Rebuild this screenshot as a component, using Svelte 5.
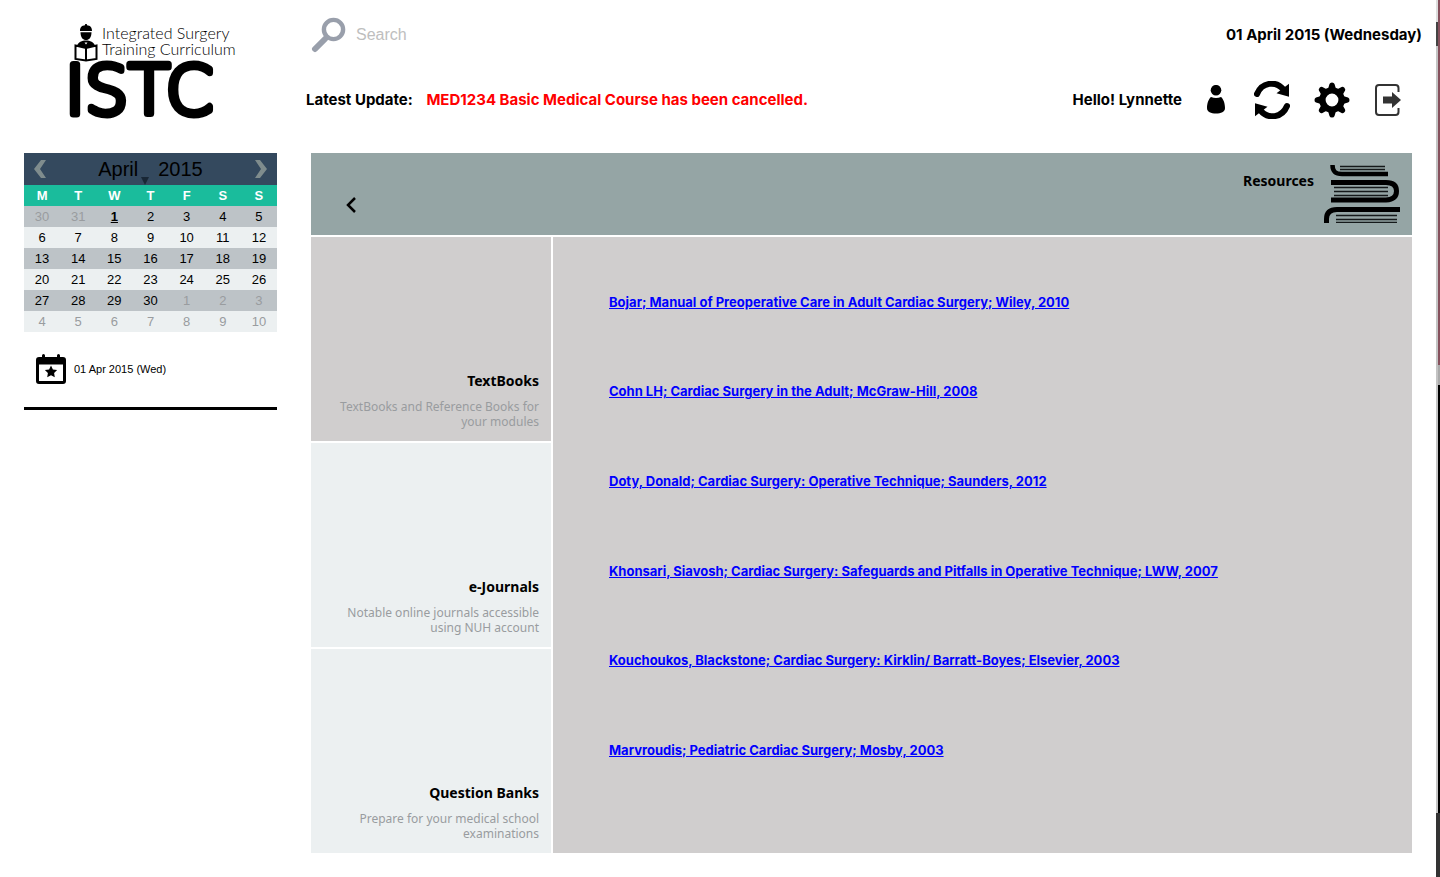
<script>
  const days = ['M', 'T', 'W', 'T', 'F', 'S', 'S'];
  const weeks = [
    [30, 31, 1, 2, 3, 4, 5],
    [6, 7, 8, 9, 10, 11, 12],
    [13, 14, 15, 16, 17, 18, 19],
    [20, 21, 22, 23, 24, 25, 26],
    [27, 28, 29, 30, 1, 2, 3],
    [4, 5, 6, 7, 8, 9, 10]
  ];
  const outside = (w, d) => (w === 0 && d > 20) || (w > 3 && d < 20);
  const sections = [
    { title: 'TextBooks', text: 'TextBooks and Reference Books for your modules' },
    { title: 'e-Journals', text: 'Notable online journals accessible using NUH account' },
    { title: 'Question Banks', text: 'Prepare for your medical school examinations' }
  ];
  const books = [
    'Bojar; Manual of Preoperative Care in Adult Cardiac Surgery; Wiley, 2010',
    'Cohn LH; Cardiac Surgery in the Adult; McGraw-Hill, 2008',
    'Doty, Donald; Cardiac Surgery: Operative Technique; Saunders, 2012',
    'Khonsari, Siavosh; Cardiac Surgery: Safeguards and Pitfalls in Operative Technique; LWW, 2007',
    'Kouchoukos, Blackstone; Cardiac Surgery: Kirklin/ Barratt-Boyes; Elsevier, 2003',
    'Marvroudis; Pediatric Cardiac Surgery; Mosby, 2003'
  ];
  let active = $state(0);
</script>

<div class="page">
  <aside>
    <div class="logo">
      <div class="logo-top">
        <svg width="24" height="38" viewBox="0 0 24 38" aria-hidden="true">
          <path d="M6 7C6 3 8 1.500 11 1.300L11.200 0h1.600L13 1.300C16 1.500 18 3 18 7z" />
          <path d="M6.500 8.200h11C17.500 13.500 15 16 12 16S6.500 13.500 6.500 8.200z" />
          <path d="M3 22C4 18 8 16.500 12 16.500S20 18 21 22L12 25z" />
          <path d="M1.500 21.500L12 24l10.500-2.500V35L12 36.500 1.500 35z" fill="#fff" stroke="#000" stroke-width="2" />
          <path d="M12 24v12.500" stroke="#000" stroke-width="2" />
          <path d="M10.500 18.500h3l-1.500 2z" fill="#fff" />
        </svg>
        <p>Integrated Surgery<br />Training Curriculum</p>
      </div>
      <svg class="wordmark" width="180" height="64" viewBox="0 0 180 64"><text x="-3" y="54">ISTC</text></svg>
    </div>

    <section class="calendar" aria-label="Calendar">
      <div class="cal-head">
        <button aria-label="Previous month">
          <svg width="12" height="18" viewBox="0 0 12 18"><path d="M7 0h5L6 9l6 9H7L0 9z" fill="#7f8c8d" /></svg>
        </button>
        <span class="month">April</span>
        <svg class="mark" width="8" height="8" viewBox="0 0 8 8" aria-hidden="true"><path d="M0 0h8L4 8z" fill="#192735" /></svg>
        <span class="year">2015</span>
        <button aria-label="Next month">
          <svg width="12" height="18" viewBox="0 0 12 18"><path d="M5 0H0l6 9-6 9h5l7-9z" fill="#7f8c8d" /></svg>
        </button>
      </div>
      <table>
        <thead>
          <tr>{#each days as d}<th>{d}</th>{/each}</tr>
        </thead>
        <tbody>
          {#each weeks as week, w}
            <tr>
              {#each week as d}
                <td class:outside={outside(w, d)} class:today={w === 0 && d === 1}>{d}</td>
              {/each}
            </tr>
          {/each}
        </tbody>
      </table>
    </section>

    <div class="event">
      <svg width="30" height="30" viewBox="0 0 30 30" aria-hidden="true">
        <path d="M7.500 1.500V5M22.500 1.500V5" stroke="#000" stroke-width="3" stroke-linecap="round" />
        <rect x="1.500" y="4.500" width="27" height="24" rx="1.500" fill="#fff" stroke="#000" stroke-width="3" />
        <path d="M1 4h28v6.500H1z" />
        <path d="M15 11.500l1.900 3.900 4.200.6-3 3 .7 4.200-3.800-2-3.800 2 .7-4.200-3-3 4.200-.6z" />
      </svg>
      <span>01 Apr 2015 (Wed)</span>
    </div>
  </aside>

  <main>
    <header>
      <div class="row search-row">
        <label class="search">
          <svg width="36" height="36" viewBox="0 0 36 36" aria-hidden="true">
            <path d="M14 22L4 32" stroke="#999fab" stroke-width="6" stroke-linecap="round" />
            <circle cx="22.500" cy="12.500" r="9.600" fill="none" stroke="#999fab" stroke-width="4.400" />
          </svg>
          <input type="text" placeholder="Search" aria-label="Search" />
        </label>
        <span class="date">01 April 2015 (Wednesday)</span>
      </div>
      <div class="row update-row">
        <p class="update">Latest Update: <strong>MED1234 Basic Medical Course has been cancelled.</strong></p>
        <div class="tools">
          <span>Hello! Lynnette</span>
          <button aria-label="Profile">
            <svg width="24" height="30" viewBox="0 0 24 30">
              <circle cx="10" cy="5.200" r="5.300" />
              <path d="M5 12Q10 14.200 15 12C17.500 14 19 18.500 19 23C19 27 15 28.500 10 28.500S1 27 1 23C1 18.500 2.500 14 5 12z" />
            </svg>
          </button>
          <button aria-label="Refresh">
            <svg width="36" height="38" viewBox="0 0 36 38">
              <path d="M3 13C8 1 22-.500 29.500 8.500" fill="none" stroke="#000" stroke-width="6" stroke-linecap="round" />
              <path d="M35 2.700v13L22.500 12.300z" />
              <path d="M33 25C28 37 14 38.500 6.500 29.500" fill="none" stroke="#000" stroke-width="6" stroke-linecap="round" />
              <path d="M1 35.300v-13L13.500 25.700z" />
            </svg>
          </button>
          <button aria-label="Settings">
            <svg width="36" height="36" viewBox="0 0 36 36">
              <circle cx="18" cy="18" r="9.600" fill="none" stroke="#000" stroke-width="6.400" />
              {#each [0, 45, 90, 135, 180, 225, 270, 315] as a}
                <path d="M14 7l1.500-5q.5-1.500 2.500-1.500t2.500 1.500L22 7z" transform="rotate({a} 18 18)" />
              {/each}
            </svg>
          </button>
          <button aria-label="Log out">
            <svg width="28" height="32" viewBox="0 0 28 32">
              <path d="M24.500 8V4Q24.500 1 21.500 1H5Q2 1 2 4V28Q2 31 5 31H21.500Q24.500 31 24.500 28V24" fill="none" stroke="#333" stroke-width="2" />
              <path d="M9 12.500h9V8l9 8-9 8v-4.500H9z" fill="#333" />
            </svg>
          </button>
        </div>
      </div>
    </header>

    <div class="banner">
      <button class="back" aria-label="Back">
        <svg width="12" height="18" viewBox="0 0 12 18"><path d="M10 2L3 9l7 7" fill="none" stroke="#000" stroke-width="2.500" /></svg>
      </button>
      <h2>Resources</h2>
      <svg class="stack" width="76" height="58" viewBox="0 0 76 58" aria-hidden="true">
        <g fill="none" stroke="#000" stroke-width="4.500">
          <path d="M8.500 0C8.500 6 11 9 18 9H64" />
          <path d="M7 17.500H62Q72.500 17.500 72.500 26T62 35H7" stroke-width="5" />
          <path d="M2.500 58V54Q2.500 44.500 13 44.500H76" stroke-width="5" />
        </g>
        <path d="M16 1.500h45M16 4.500h45M10 22.500h54M10 26.500h54M10 30.500h54M12 50.500h61M12 54.500h61M12 57.500h61" stroke="#15191a" stroke-width="1.400" />
      </svg>
    </div>

    <div class="content">
      <nav>
        {#each sections as s, i}
          <button class="tile" class:active={active === i} onclick={() => (active = i)}>
            <strong>{s.title}</strong>
            <span>{s.text}</span>
          </button>
        {/each}
      </nav>
      <ul>
        {#each books as b}
          <li><a href="#book">{b}</a></li>
        {/each}
      </ul>
    </div>
  </main>
  <div class="edge" aria-hidden="true">
    <div class="frame"></div>
    <div class="strip"><i class="wood"></i><i class="grey"></i><i class="black"></i><i class="dark"></i></div>
  </div>
</div>

<style>
  :global(body) { background: #fff; }
  .page {
    display: flex;
    min-height: 100vh;
    box-sizing: border-box;
    padding-left: 24px;
    font-family: "Liberation Sans", Arial, sans-serif;
    color: #000;
  }
  button { border: 0; padding: 0; background: none; font: inherit; color: inherit; display: block; cursor: pointer; }
  svg { display: block; }
  p, h2, ul { margin: 0; padding: 0; }
  aside { width: 253px; flex: none; }
  .logo { height: 129px; padding: 24px 0 0 44px; }
  .logo-top { display: flex; gap: 4px; padding-left: 6px; height: 36px; }
  .logo p { font: 300 16px/16px Lato, sans-serif; padding-top: 1px; white-space: nowrap; }
  .wordmark { overflow: visible; }
  .wordmark text {
    font: 200 68px "DejaVu Sans", sans-serif;
    stroke: #000;
    stroke-width: 7px;
    stroke-linejoin: round;
  }
  .cal-head {
    display: flex;
    align-items: center;
    height: 32px;
    padding: 0 10px;
    background: #34495e;
    font-size: 20px;
  }
  .month { margin-left: auto; }
  .year { margin-right: auto; padding-left: 9px; }
  .mark { align-self: flex-end; margin-left: 3px; }
  table { width: 100%; table-layout: fixed; border-collapse: collapse; font-size: 13px; text-align: center; }
  th, td { height: 21px; padding: 0; line-height: 21px; }
  th { background: #1abc9c; color: #fff; }
  td { background: #ecf0f1; }
  tbody tr:nth-child(odd) td { background: #bdc3c7; }
  td.outside { color: #999c9f; }
  td.today { font-weight: 700; text-decoration: underline; }
  .event {
    display: flex;
    align-items: center;
    gap: 8px;
    padding: 22px 12px 23px;
    border-bottom: 3px solid #000;
    font-size: 11px;
  }
  main { flex: 1; min-width: 0; display: flex; flex-direction: column; padding: 0 24px 24px 34px; }
  header { height: 153px; font: 700 15px Inter, sans-serif; margin-left: -5px; margin-right: -10px; }
  .row { display: flex; justify-content: space-between; align-items: center; }
  .search-row { height: 69px; }
  .search { display: flex; align-items: center; gap: 9px; padding-left: 5px; }
  input { border: 0; outline: 0; padding: 0; font: 16px "Liberation Sans", Arial, sans-serif; background: none; }
  input::placeholder { color: #bebebe; }
  .update-row { height: 61px; }
  .update strong { color: #f00; margin-left: 10px; font-weight: 700; }
  .tools { display: flex; align-items: center; padding-right: 20px; gap: 24px; }
  .banner { display: flex; height: 82px; box-sizing: border-box; padding: 12px 12px 0 34px; background: #95a5a5; }
  .back { align-self: flex-start; margin-top: 31px; }
  h2 { margin-left: auto; font: 700 14px/32px "Noto Sans", sans-serif; }
  .stack { margin-left: 10px; }
  .content { flex: 1; display: grid; grid-template-columns: 240px 1fr; gap: 2px; margin-top: 2px; }
  nav { display: grid; grid-template-rows: repeat(3, 1fr); gap: 2px; }
  .tile {
    display: flex;
    flex-direction: column;
    justify-content: flex-end;
    gap: 8px;
    padding: 12px;
    background: #ecf0f1;
    text-align: right;
    font: 12px/15px "Noto Sans", sans-serif;
    color: #999c9f;
  }
  .tile strong { font-size: 14px; line-height: 20px; font-weight: 700; color: #000; }
  .tile.active { background: #d0cece; }
  ul {
    display: grid;
    grid-auto-rows: 1fr;
    list-style: none;
    background: #d0cece;
    padding: 20px 56px 58px;
    font: 700 13px Inter, sans-serif;
  }
  li { display: flex; align-items: center; }
  a { color: #00f; }
  .edge { width: 4px; flex: none; display: flex; }
  .frame { flex: 1; background: linear-gradient(#ddd 0 22px, #444 22px 46px, #c4c4c4 46px 813px, #333 813px); }
  .strip { flex: 1; display: flex; flex-direction: column; }
  .wood { flex: 365; background: #86505c; }
  .grey { flex: 20; background: #aaa; }
  .black { flex: 428; background: #000; }
  .dark { flex: 64; background: #333; }
</style>
